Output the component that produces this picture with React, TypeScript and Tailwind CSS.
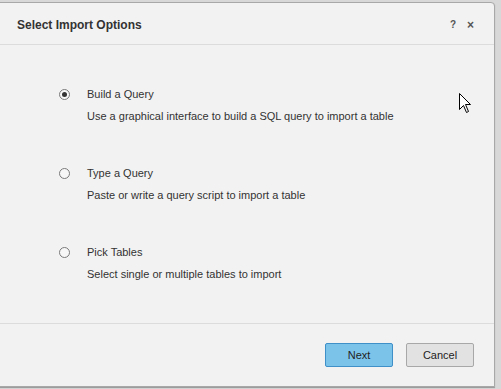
import React from "react";

const options = [
    { title: "Build a Query", desc: "Use a graphical interface to build a SQL query to import a table", checked: true },
    { title: "Type a Query", desc: "Paste or write a query script to import a table", checked: false },
    { title: "Pick Tables", desc: "Select single or multiple tables to import", checked: false },
];

function Radio({ checked }: { checked: boolean }) {
    return (
        <span className="w-[11px] h-[11px] rounded-full border border-[#7a7a7a] bg-[#f7f7f7] flex items-center justify-center shrink-0">
            {checked && <span className="w-[5px] h-[5px] rounded-full bg-[#333]" />}
        </span>
    );
}

export default function App() {
    return (
        <div
            className="w-[501px] h-[389px] relative overflow-hidden bg-[#d8d8d8] pt-[2px]"
            style={{ fontFamily: '"Liberation Sans", Arial, sans-serif' }}
        >
            <div className="ml-[-3px] w-[498px] h-[385px] bg-[#f2f2f2] border border-[#a8a8a8] rounded-tr-[4px] flex flex-col shadow-[0_1px_1px_rgba(0,0,0,0.3)]">
                {/* Header */}
                <div className="h-[42px] border-b border-[#dcdcdc] flex items-center pl-[19px] pr-[20px] pt-[2px]">
                    <span className="text-[12px] font-bold text-[#333]">Select Import Options</span>
                    <span className="ml-auto text-[10px] font-bold text-[#555]">?</span>
                    <span className="ml-[11px] text-[12px] font-bold text-[#555] leading-none">×</span>
                </div>

                {/* Options */}
                <div className="flex-1 pl-[61px] pt-[42px] flex flex-col gap-[43px]">
                    {options.map((o) => (
                        <div key={o.title} className="flex flex-col gap-[8px]">
                            <div className="flex items-center gap-[17px] h-[14px]">
                                <Radio checked={o.checked} />
                                <span className="text-[11px] text-[#333]">{o.title}</span>
                            </div>
                            <div className="pl-[28px] text-[11px] text-[#333] h-[14px] leading-[14px]">{o.desc}</div>
                        </div>
                    ))}
                </div>

                {/* Footer */}
                <div className="h-[63px] border-t border-[#dcdcdc] flex items-start justify-end gap-[13px] pr-[20px] pt-[19px]">
                    <button className="w-[68px] h-[24px] rounded-[2px] border border-[#3f8fc8] bg-[#7cc3ea] text-[11px] text-[#222]">
                        Next
                    </button>
                    <button className="w-[68px] h-[24px] rounded-[2px] border border-[#a8a8a8] bg-[#e2e2e2] text-[11px] text-[#222]">
                        Cancel
                    </button>
                </div>
            </div>

            {/* mouse pointer */}
            <svg className="absolute left-[459px] top-[93px]" width="13" height="21" viewBox="0 0 13 21">
                <path d="M0.5 0.5 L0.5 16.5 L4.5 12.5 L7.5 19.5 L9.5 18.5 L6.5 11.5 L11.5 11.5 Z" fill="#fff" stroke="#000" strokeWidth="1" />
            </svg>
        </div>
    );
}
